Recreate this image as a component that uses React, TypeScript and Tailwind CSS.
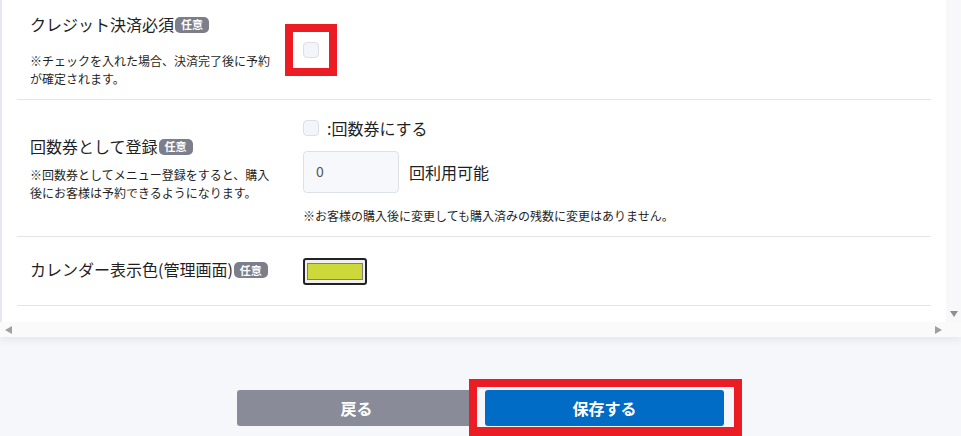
export default function App() {
  return (
    <div
      className="relative w-[961px] h-[436px] overflow-hidden bg-[#f6f7fa] text-[#1f1f24]"
      style={{ fontFamily: '"Noto Sans CJK JP", "Noto Sans", sans-serif' }}
    >
      {/* フォームカード（スクロール領域） */}
      <section className="flex flex-col h-[337px] bg-white shadow-[0_3px_8px_rgba(0,0,0,0.07)]">
        <div className="flex flex-1 min-h-0">
          <div className="flex-1 border-l-2 border-[#e6e7f2] px-[15px]">
            {/* クレジット決済必須 */}
            <div className="flex items-center h-[100px] border-b border-[#e3e4ee]">
              <div className="w-[286px] shrink-0 pl-[13px] pr-[28px]">
                <Label text="クレジット決済必須" />
                <p className="mt-[16px] text-[12px] leading-[18px]">
                  ※チェックを入れた場合、決済完了後に予約が確定されます。
                </p>
              </div>
              <Checkbox />
            </div>

            {/* 回数券として登録 */}
            <div className="flex items-center h-[137px] border-b border-[#e3e4ee]">
              <div className="w-[286px] shrink-0 pl-[13px] pr-[28px]">
                <Label text="回数券として登録" />
                <p className="mt-[8px] text-[12px] leading-[18.5px]">
                  ※回数券としてメニュー登録をすると、購入後にお客様は予約できるようになります。
                </p>
              </div>
              <div className="pt-[4px]">
                <label className="flex items-center gap-[8px] h-[24px] text-[16px]">
                  <Checkbox />
                  <span>:回数券にする</span>
                </label>
                <div className="flex items-center gap-[10px] mt-[11px]">
                  <div className="flex items-center w-[96px] h-[42px] pl-[12px] rounded-[4px] border border-[#dfe1ea] bg-[#f7f8fb] text-[14px] text-[#555]">
                    0
                  </div>
                  <span className="text-[16px]">回利用可能</span>
                </div>
                <p className="mt-[14px] text-[12px] leading-[18px]">
                  ※お客様の購入後に変更しても購入済みの残数に変更はありません。
                </p>
              </div>
            </div>

            {/* カレンダー表示色 */}
            <div className="flex items-center h-[69px] border-b border-[#e3e4ee]">
              <div className="w-[286px] shrink-0 pl-[13px] pr-[20px] mb-[4px]">
                <Label text="カレンダー表示色(管理画面)" />
              </div>
              <div className="w-[64px] h-[27px] mt-[1px] rounded-[3px] border-2 border-[#222] bg-[#f0f0f0] px-[2px] py-[3px]">
                <div className="h-full bg-[#cdd83a] border border-[#808080]" />
              </div>
            </div>
          </div>

          {/* 縦スクロールバー */}
          <div className="w-[15px] shrink-0 flex flex-col justify-end items-center bg-[#f8f8fa] pb-[5px]">
            <div className="w-0 h-0 border-x-[4.5px] border-x-transparent border-t-[6px] border-t-[#8f8f8f]" />
          </div>
        </div>

        {/* 横スクロールバー */}
        <div className="flex items-center justify-between h-[15px] bg-[#fafafa] pl-[5px] pr-[19px]">
          <div className="w-0 h-0 border-y-[4px] border-y-transparent border-r-[7px] border-r-[#a0a0a0]" />
          <div className="w-0 h-0 border-y-[4px] border-y-transparent border-l-[7px] border-l-[#a0a0a0]" />
        </div>
      </section>

      {/* ボタン */}
      <div className="flex justify-center gap-[9px] pt-[53px]">
        <button className="w-[239px] h-[36px] rounded-[3px] bg-[#8a8b99] text-white text-[16px] font-bold">
          戻る
        </button>
        <button className="w-[239px] h-[36px] rounded-[3px] bg-[#006cc6] text-white text-[16px] font-bold">
          保存する
        </button>
      </div>

      {/* 注釈の赤枠 */}
      <div className="absolute left-[285px] top-[24px] w-[52px] h-[52px] border-[8px] border-[#ec1c24]" />
      <div className="absolute left-[469px] top-[379px] w-[273px] h-[57px] border-[8px] border-b-0 border-[#ec1c24]" />
      <div className="absolute left-[469px] top-[427px] w-[273px] h-[9px] bg-[#ec1c24]" />
    </div>
  );
}

function Label({ text }: { text: string }) {
  return (
    <div className="flex items-center h-[24px] text-[16px] whitespace-nowrap">
      <span>{text}</span>
      <span className="ml-[1px] mt-[2px] inline-flex items-center h-[16px] px-[6px] rounded-[5px] bg-[#7c7e8b] text-white text-[11px] font-bold">
        任意
      </span>
    </div>
  );
}

function Checkbox() {
  return <span className="block w-[16px] h-[16px] rounded-[4px] border border-[#dcdfe8] bg-[#f4f5fa]" />;
}
